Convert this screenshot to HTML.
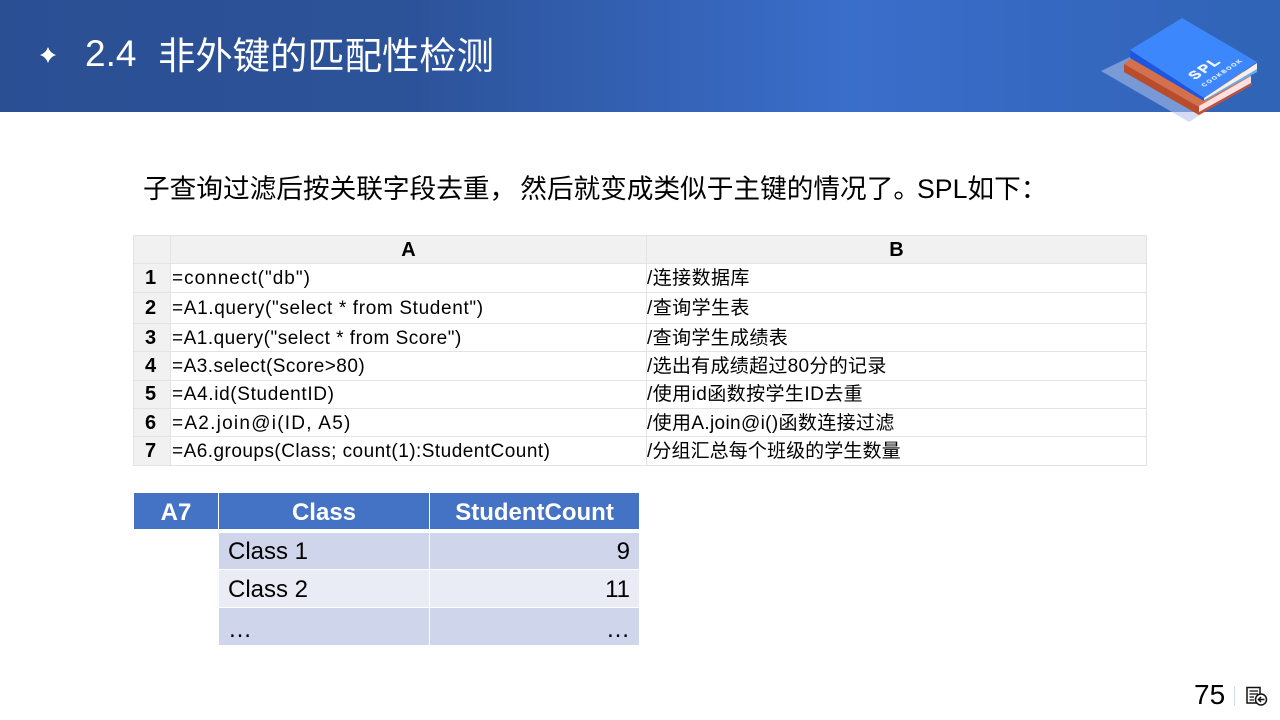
<!DOCTYPE html>
<html lang="zh"><head><meta charset="utf-8"><title>2.4 非外键的匹配性检测</title>
<style>
html,body{margin:0;padding:0;background:#fff}
#p{position:relative;width:1280px;height:720px;overflow:hidden;background:#fff;font-family:"Liberation Sans","Noto Sans CJK SC",sans-serif;color:#000}
#bar{position:absolute;left:0;top:0;width:1280px;height:112px;background:linear-gradient(90deg,#2b4f93 0,#2c5298 400px,#3a6ecb 850px,#3568c0 1050px,#3064b6 1280px)}
.t{position:absolute;white-space:nowrap}
.l{position:absolute;background:#e3e3e3}
.c{font-size:19px;line-height:24px;letter-spacing:.47px}
.d{font-size:19px;line-height:24px;letter-spacing:.1px}
.n{font-size:20px;font-weight:bold;line-height:24px;width:37px;text-align:center;left:132px}
.r{position:absolute;font-size:24px;line-height:38px;box-sizing:border-box}
.h{background:#4472c4;color:#fff;font-weight:bold;text-align:center;top:493px;height:36px}
</style></head><body><div id="p">
<div id="bar"></div>
<svg style="position:absolute;left:38px;top:45px" width="20" height="20" viewBox="0 0 20 20"><path d="M10 2Q12 8 18 10 12 12 10 18 8 12 2 10 8 8 10 2Z" fill="#fff"/></svg>
<div class="t" style="left:85px;top:30px;font-size:37px;line-height:48px;color:#fff;">2.4</div>
<div class="t" style="left:158px;top:32px;font-size:37.330px;line-height:48px;color:#fff;">非外键的匹配性检测</div>

<svg style="position:absolute;left:1090px;top:0" width="190" height="130" viewBox="0 0 190 130">
<polygon points="11,71 40,57 115,112 82,112" fill="#a9bbe8" fill-opacity=".6"/>
<polygon points="82,112 115,112 99,122" fill="#d3dbf5"/>
<polygon points="40,59 34,64 109,107 161,76 120,50" fill="#d4704c"/>
<polygon points="34,64 109,107 109,115 34,72" fill="#b94c2b"/>
<polygon points="109,106 161,76 161,83 109,112" fill="#ffe0e0"/>
<polygon points="109,112 162,83 162,85 109,115" fill="#c9502f"/>
<polygon points="114,98 167,64 167,72 114,101" fill="#62b0ee"/>
<polygon points="114,98 167,63 167,69 114,100" fill="#fdeee8"/>
<polygon points="40,50 114,97 114,101 40,58" fill="#1f56de"/>
<polygon points="92,18 167,62 114,98 40,50" fill="#3d87fd"/>
<text transform="matrix(.83 -.56 .84 .54 105 80)" font-family="'Liberation Sans',sans-serif" font-weight="bold" font-size="14" fill="#f2f4ff" stroke="#f2f4ff" stroke-width=".5" letter-spacing="2">SPL</text>
<text transform="matrix(.83 -.56 .84 .54 114.300 87)" font-family="'Liberation Sans',sans-serif" font-weight="bold" font-size="6" fill="#e6ecff" stroke="#e6ecff" stroke-width=".2" letter-spacing="1.400">COOKBOOK</text>
</svg>

<div class="t" style="left:143px;top:170px;font-size:26.670px;line-height:38px;">子查询过滤后按关联字段去重<span style="letter-spacing:4px">，</span>然后就变成类似于主键的情况了<span style="letter-spacing:-3px">。</span>SPL如下：</div>

<div style="position:absolute;left:133px;top:235px;width:1014px;height:28px;background:#f1f1f1"></div>
<div style="position:absolute;left:133px;top:263px;width:37px;height:203px;background:#f1f1f1"></div>
<div class="l" style="left:133px;top:235px;width:1014px;height:1px"></div>
<div class="l" style="left:133px;top:263px;width:1014px;height:1px"></div>
<div class="l" style="left:133px;top:292px;width:1014px;height:1px"></div>
<div class="l" style="left:133px;top:323px;width:1014px;height:1px"></div>
<div class="l" style="left:133px;top:351px;width:1014px;height:1px"></div>
<div class="l" style="left:133px;top:380px;width:1014px;height:1px"></div>
<div class="l" style="left:133px;top:408px;width:1014px;height:1px"></div>
<div class="l" style="left:133px;top:436px;width:1014px;height:1px"></div>
<div class="l" style="left:133px;top:465px;width:1014px;height:1px"></div>
<div class="l" style="left:133px;top:235px;width:1px;height:231px"></div>
<div class="l" style="left:170px;top:235px;width:1px;height:231px"></div>
<div class="l" style="left:646px;top:235px;width:1px;height:231px"></div>
<div class="l" style="left:1146px;top:235px;width:1px;height:231px"></div>

<div class="t n" style="left:390px;top:238px">A</div>
<div class="t n" style="left:878px;top:238px">B</div>
<div class="t n" style="top:266px">1</div><div class="t c" style="left:172px;top:267px;letter-spacing:1px">=connect("db")</div><div class="t d" style="left:647px;top:267px;letter-spacing:.43px">/连接数据库</div>
<div class="t n" style="top:296px">2</div><div class="t c" style="left:172px;top:297px;letter-spacing:.65px">=A1.query("select * from Student")</div><div class="t d" style="left:647px;top:297px;letter-spacing:.43px">/查询学生表</div>
<div class="t n" style="top:326px">3</div><div class="t c" style="left:172px;top:327px;letter-spacing:.5px">=A1.query("select * from Score")</div><div class="t d" style="left:647px;top:327px;letter-spacing:.35px">/查询学生成绩表</div>
<div class="t n" style="top:354px">4</div><div class="t c" style="left:172px;top:355px">=A3.select(Score&gt;80)</div><div class="t d" style="left:647px;top:355px;letter-spacing:.3px">/选出有成绩超过80分的记录</div>
<div class="t n" style="top:382px">5</div><div class="t c" style="left:172px;top:383px;letter-spacing:.65px">=A4.id(StudentID)</div><div class="t d" style="left:647px;top:383px;letter-spacing:.43px">/使用id函数按学生ID去重</div>
<div class="t n" style="top:411px">6</div><div class="t c" style="left:172px;top:412px;letter-spacing:1.25px">=A2.join@i(ID, A5)</div><div class="t d" style="left:647px;top:412px;letter-spacing:.35px">/使用A.join@i()函数连接过滤</div>
<div class="t n" style="top:439px">7</div><div class="t c" style="left:172px;top:440px">=A6.groups(Class; count(1):StudentCount)</div><div class="t d" style="left:647px;top:440px">/分组汇总每个班级的学生数量</div>

<div class="r h" style="left:134px;width:84px;line-height:40px">A7</div>
<div class="r h" style="left:219px;width:210px;line-height:40px">Class</div>
<div class="r h" style="left:430px;width:209px;line-height:40px">StudentCount</div>
<div class="r" style="left:219px;top:533px;width:210px;height:36px;background:#cfd5ea;padding-left:9px">Class 1</div>
<div class="r" style="left:430px;top:533px;width:209px;height:36px;background:#cfd5ea;padding-right:9px;text-align:right">9</div>
<div class="r" style="left:219px;top:570px;width:210px;height:37px;background:#e9ebf5;padding-left:9px;line-height:40px">Class 2</div>
<div class="r" style="left:430px;top:570px;width:209px;height:37px;background:#e9ebf5;padding-right:9px;text-align:right;line-height:40px">11</div>
<div class="r" style="left:219px;top:608px;width:210px;height:37px;background:#cfd5ea;padding-left:9px;line-height:44px">…</div>
<div class="r" style="left:430px;top:608px;width:209px;height:37px;background:#cfd5ea;padding-right:9px;text-align:right;line-height:44px">…</div>

<div class="t" style="left:1194px;top:678px;font-size:28px;line-height:34px;">75</div>
<div style="position:absolute;left:1234px;top:686px;width:1px;height:20px;background:#d5dcea"></div>
<svg style="position:absolute;left:1245px;top:686px" width="24" height="22" viewBox="0 0 24 22" fill="none" stroke="#111">
<path d="M15 17H2V1.500H15V8" stroke-width="1.500"/>
<path d="M4.500 5H13M4.500 8H13M4.500 11H9M4.500 14H9" stroke-width="1.300"/>
<circle cx="16" cy="13.500" r="5.500" fill="#fff" stroke-width="1.500"/>
<path d="M19.500 13.500H14M16 11L13.500 13.500 16 16" stroke-width="1.500"/>
</svg>
</div></body></html>
